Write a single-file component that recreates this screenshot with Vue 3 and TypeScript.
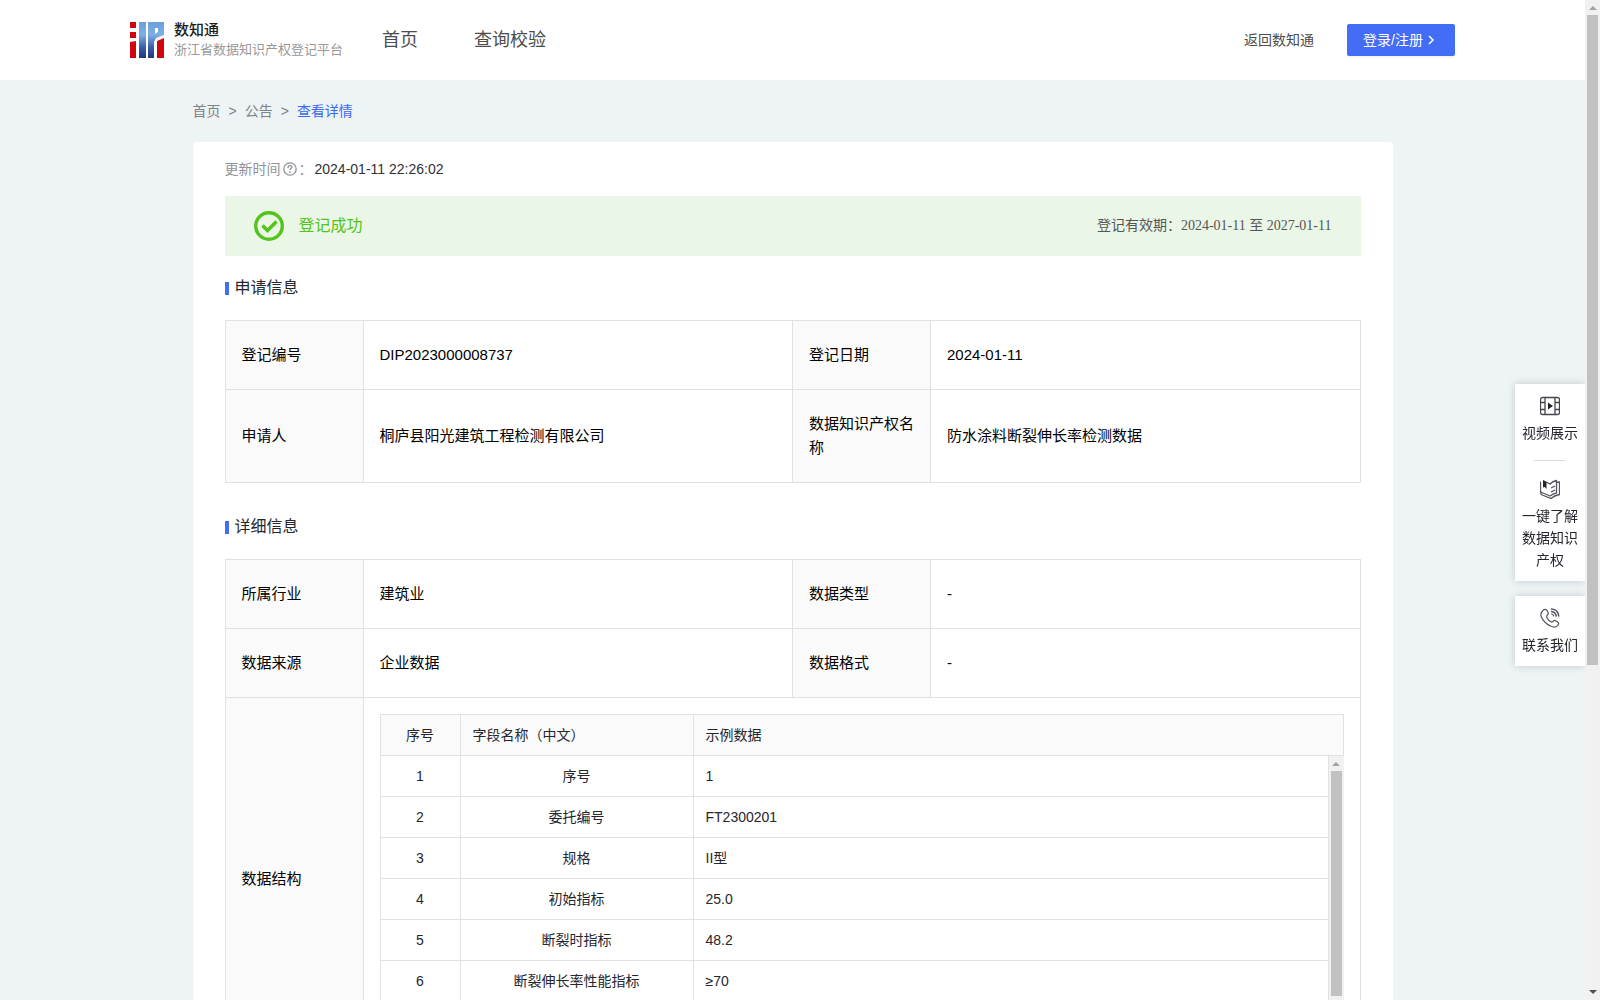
<script setup lang="ts">
interface Pair {
  label: string
  value: string
}

interface FieldRow {
  name: string
  sample: string
}

const navItems: string[] = ['首页', '查询校验']

const applyRows: Pair[][] = [
  [
    { label: '登记编号', value: 'DIP2023000008737' },
    { label: '登记日期', value: '2024-01-11' },
  ],
  [
    { label: '申请人', value: '桐庐县阳光建筑工程检测有限公司' },
    { label: '数据知识产权名称', value: '防水涂料断裂伸长率检测数据' },
  ],
]

const detailRows: Pair[][] = [
  [
    { label: '所属行业', value: '建筑业' },
    { label: '数据类型', value: '-' },
  ],
  [
    { label: '数据来源', value: '企业数据' },
    { label: '数据格式', value: '-' },
  ],
]

const fields: FieldRow[] = [
  { name: '序号', sample: '1' },
  { name: '委托编号', sample: 'FT2300201' },
  { name: '规格', sample: 'II型' },
  { name: '初始指标', sample: '25.0' },
  { name: '断裂时指标', sample: '48.2' },
  { name: '断裂伸长率性能指标', sample: '≥70' },
]
</script>

<template>
  <div class="shell">
    <div class="viewport">
      <header class="topbar">
        <a class="brand" href="#">
          <svg class="brand-mark" viewBox="0 0 34 36" aria-hidden="true">
            <defs>
              <linearGradient id="brandBlue" x1="0" y1="0" x2="0" y2="36" gradientUnits="userSpaceOnUse">
                <stop offset="0" stop-color="#6b9fd8" />
                <stop offset="0.35" stop-color="#7fb0e4" />
                <stop offset="0.7" stop-color="#3c5ea8" />
                <stop offset="1" stop-color="#22367c" />
              </linearGradient>
            </defs>
            <path fill="#d0060c" d="M0 0h6v6H0zM0 10h6v6H0zM0 20l6-1v17H0z" />
            <path fill="url(#brandBlue)" d="M9 0h7v36H9zM18 0h16v13l-8 3-2 4v16h-6z" />
            <path fill="#fff" d="M25 6h3v4l-3 2z" />
            <path fill="#d0060c" d="M27 19l7-3v20h-7z" />
          </svg>
          <span class="brand-text">
            <strong>数知通</strong>
            <span>浙江省数据知识产权登记平台</span>
          </span>
        </a>
        <nav class="nav">
          <a v-for="item in navItems" :key="item" href="#">{{ item }}</a>
        </nav>
        <a class="back" href="#">返回数知通</a>
        <button class="login" type="button">
          <span>登录/注册</span>
          <svg viewBox="0 0 14 14" aria-hidden="true">
            <path d="M4 3l4 4-4 4" fill="none" stroke="currentColor" stroke-width="1.5" />
          </svg>
        </button>
      </header>

      <main class="page">
        <nav class="crumbs">
          <a href="#">首页</a><span>&gt;</span><a href="#">公告</a><span>&gt;</span><a class="current" href="#">查看详情</a>
        </nav>

        <article class="card">
          <p class="updated">
            <span>更新时间</span>
            <svg viewBox="0 0 14 14" aria-hidden="true">
              <g fill="none" stroke="#909399" stroke-width="1.3">
                <circle cx="7" cy="7" r="6.200" />
                <path d="M5 6c0-3 4-3 4-1 0 1-2 1-2 3M7 9v2" />
              </g>
            </svg>
            <span>：</span>
            <time>2024-01-11 22:26:02</time>
          </p>

          <div class="banner">
            <svg viewBox="0 0 30 30" aria-hidden="true">
              <g fill="none" stroke="#52c41a">
                <circle cx="15" cy="15" r="13.3" stroke-width="3.4" />
                <path d="M8.5 14.5l5 5 9-9" stroke-width="3.6" />
              </g>
            </svg>
            <span class="status">登记成功</span>
            <span class="validity">登记有效期：2024-01-11 至 2027-01-11</span>
          </div>

          <h2 class="section-title">申请信息</h2>
          <table class="info">
            <colgroup><col class="label-col" /><col /><col class="label-col" /><col /></colgroup>
            <tbody>
              <tr v-for="(row, i) in applyRows" :key="i">
                <template v-for="pair in row" :key="pair.label">
                  <th scope="row">{{ pair.label }}</th>
                  <td>{{ pair.value }}</td>
                </template>
              </tr>
            </tbody>
          </table>

          <h2 class="section-title later">详细信息</h2>
          <table class="info">
            <colgroup><col class="label-col" /><col /><col class="label-col" /><col /></colgroup>
            <tbody>
              <tr v-for="(row, i) in detailRows" :key="i">
                <template v-for="pair in row" :key="pair.label">
                  <th scope="row">{{ pair.label }}</th>
                  <td>{{ pair.value }}</td>
                </template>
              </tr>
              <tr>
                <th scope="row">数据结构</th>
                <td class="nested" colspan="3">
                  <table class="fields fields-head">
                    <colgroup><col class="index-col" /><col class="name-col" /><col /></colgroup>
                    <thead>
                      <tr>
                        <th scope="col">序号</th>
                        <th scope="col">字段名称（中文）</th>
                        <th scope="col">示例数据</th>
                      </tr>
                    </thead>
                  </table>
                  <div class="fields-body">
                    <table class="fields">
                      <colgroup><col class="index-col" /><col class="name-col" /><col /></colgroup>
                      <tbody>
                        <tr v-for="(field, i) in fields" :key="field.name">
                          <td>{{ i + 1 }}</td>
                          <td>{{ field.name }}</td>
                          <td>{{ field.sample }}</td>
                        </tr>
                      </tbody>
                    </table>
                    <div class="scrollbar" aria-hidden="true">
                      <i class="arrow up"></i>
                      <i class="thumb inner-thumb"></i>
                      <i class="arrow down"></i>
                    </div>
                  </div>
                </td>
              </tr>
            </tbody>
          </table>
        </article>
      </main>
    </div>

    <div class="scrollbar" aria-hidden="true">
      <i class="arrow up"></i>
      <i class="thumb page-thumb"></i>
      <i class="arrow down"></i>
    </div>

    <aside class="dock">
      <div class="dock-box">
        <a href="#">
          <svg viewBox="0 0 20 20" aria-hidden="true">
            <g fill="none" stroke="#44454d">
              <rect x="0.5" y="1.5" width="19" height="17" rx="2" stroke-width="1.300" />
              <path d="M5 1.5v17M15 1.5v17M0.5 6.500h4.500M0.5 13.500h4.500M15 6.500h4.500M15 13.500h4.500" stroke-width="1.300" />
            </g>
            <path d="M8 6.5l5 3.500-5 3.500z" fill="#22232b" />
          </svg>
          <span>视频展示</span>
        </a>
        <hr />
        <a href="#">
          <svg viewBox="0 0 20 20" aria-hidden="true">
            <g fill="none" stroke="#55565e" stroke-width="1.300" stroke-linejoin="round">
              <path d="M3 1.500l7 3.500c2-2 4-3 6.500-3.500v12.500c-2.500.5-4.500 1.500-6.500 3l-9.500-4V2.500" />
              <path d="M16.500 3.500l3-.5v12.500c-3 .5-6 1.500-8.500 4l-10-4v-3" />
              <path d="M11 9l4-2M11 13l4-2" />
            </g>
            <path d="M3 1.500l3.500 1.700v6.800l-1.700-2-1.800 0.500z" fill="#22232b" />
          </svg>
          <span>一键了解数据知识产权</span>
        </a>
      </div>
      <div class="dock-box">
        <a href="#">
          <svg viewBox="0 0 20 20" aria-hidden="true">
            <g fill="none" stroke="#55565e" stroke-width="1.200" stroke-linecap="round" stroke-linejoin="round">
              <path d="M3 2.500C4.500 1 6 1 7 2.500l1 2c.6 1.300.2 2-.8 2.800-1 .8-.8 1.500 0 2.900s2 2.600 3.200 3.300c1.300.8 1.900.7 2.700-.2.900-1 1.700-1.100 2.800-.4l1.800 1.200c1.100.8 1.200 1.800.4 2.900-1.500 2.200-4.600 2.600-8.100.8C6 15.800 2.800 12.500 1.300 8.800.3 6.200.8 4.200 3 2.500z" />
              <path d="M11.500 1c4 .3 6.800 3 7.200 7M11.500 3.500c2.600.3 4.200 1.800 4.700 4.500" stroke-width="1.500" />
              <path d="M11.500 6c1.200.2 1.900.8 2.200 2" />
            </g>
          </svg>
          <span>联系我们</span>
        </a>
      </div>
    </aside>
  </div>
</template>

<style>
body {
  margin: 0;
}
</style>

<style scoped>
.shell {
  display: flex;
  height: 100vh;
  overflow: hidden;
  background: #eef3f6;
  color: #25262e;
  font: 14px/22px "Liberation Sans", "Noto Sans CJK SC", sans-serif;
}

.shell * {
  box-sizing: border-box;
}

a {
  color: inherit;
  text-decoration: none;
}

.viewport {
  flex: 1;
  min-width: 0;
  overflow-y: auto;
  scrollbar-width: none;
}

.topbar {
  display: flex;
  align-items: center;
  height: 80px;
  padding: 0 130px;
  background: #fff;
  color: #4c4c4c;
  white-space: nowrap;
}

.brand {
  display: flex;
  align-items: center;
  gap: 10px;
}

.brand-mark {
  width: 34px;
  height: 36px;
}

.brand-text {
  display: flex;
  flex-direction: column;
  color: #999;
  font-size: 13px;
  line-height: 20px;
}

.brand-text strong {
  color: #1c1c1c;
  font-size: 15px;
  font-weight: 500;
}

.nav {
  display: flex;
  gap: 56px;
  margin-left: 39px;
  font-size: 18px;
}

.back {
  margin-left: auto;
}

.login {
  display: flex;
  align-items: center;
  height: 32px;
  margin-left: 33px;
  padding: 0 16px;
  border: 0;
  border-radius: 2px;
  background: #446df6;
  box-shadow: 0 2px 0 rgba(0, 0, 0, 0.04);
  color: #fff;
  font: inherit;
}

.login svg {
  width: 14px;
  height: 14px;
  margin-left: 2px;
}

.page {
  max-width: 1200px;
  margin: 0 auto;
}

.crumbs {
  display: flex;
  gap: 8px;
  padding: 20px 0;
  color: #808285;
}

.crumbs .current {
  color: #3a68f2;
}

.card {
  padding: 16px 32px 32px;
  border-radius: 4px;
  background: #fff;
}

.updated {
  display: flex;
  align-items: center;
  margin: 0 0 16px;
  color: #909399;
}

.updated svg {
  width: 14px;
  height: 14px;
  margin: 0 2px;
}

.updated time {
  margin-left: 2px;
  color: #303133;
}

.banner {
  display: flex;
  align-items: center;
  height: 60px;
  padding: 0 29px;
  background: #ebf7e6;
}

.banner svg {
  width: 30px;
  height: 30px;
}

.status {
  margin-left: 15px;
  color: #52c41a;
  font-size: 16px;
}

.validity {
  margin-left: auto;
  color: #555;
  font-family: "Liberation Serif", "Noto Sans CJK SC", serif;
}

.section-title {
  display: flex;
  align-items: center;
  gap: 6px;
  margin: 20px 0;
  font-size: 16px;
  font-weight: 400;
  line-height: 24px;
}

.section-title::before {
  width: 4px;
  height: 13px;
  background: #446df6;
  content: "";
}

.section-title.later {
  margin-top: 32px;
}

table {
  width: 100%;
  border-spacing: 0;
  table-layout: fixed;
}

th {
  font-weight: 400;
  text-align: left;
}

.info {
  border-top: 1px solid #e1e1e1;
  border-left: 1px solid #e1e1e1;
  color: #000;
  font-size: 15px;
  line-height: 24px;
}

.info th,
.info td {
  padding: 22px 16px;
  border-right: 1px solid #e1e1e1;
  border-bottom: 1px solid #e1e1e1;
}

.info th {
  background: #fafafa;
}

.label-col {
  width: 138px;
}

.info td.nested {
  padding: 16px;
}

.fields {
  border-left: 1px solid #e1e1e1;
  color: #25262e;
  font-size: 14px;
}

.fields-head {
  border-top: 1px solid #e1e1e1;
}

.info .fields th,
.info .fields td {
  padding: 8px 12px;
}

.fields td:nth-child(-n + 2),
.fields th:first-child {
  text-align: center;
}

.index-col {
  width: 80px;
}

.name-col {
  width: 233px;
}

.fields-body {
  display: flex;
  align-items: flex-start;
  height: 288px;
  overflow: hidden;
}

.fields-body .fields {
  flex: 1;
  min-width: 0;
}

.scrollbar {
  display: flex;
  flex: none;
  flex-direction: column;
  align-items: center;
  align-self: stretch;
  width: 15px;
  background: #f1f1f1;
}

.arrow {
  height: 15px;
}

.arrow::before {
  display: block;
  border: 4px solid transparent;
  content: "";
}

.arrow.up::before {
  margin-top: 2px;
  border-bottom-color: #a3a3a3;
}

.arrow.down {
  margin-top: auto;
}

.arrow.down::before {
  margin-top: 5px;
  border-top-color: #505050;
}

.thumb {
  width: 11px;
  background: #c1c1c1;
}

.page-thumb {
  height: 65%;
}

.inner-thumb {
  height: 78%;
}

.dock {
  position: fixed;
  top: 384px;
  right: 15px;
  display: flex;
  flex-direction: column;
  gap: 15px;
  width: 70px;
}

.dock-box {
  padding: 12px 7px 10px;
  background: #fff;
  box-shadow: 0 0 8px rgba(0, 0, 0, 0.18);
  clip-path: inset(-12px 0 -12px -12px);
}

.dock-box a {
  display: flex;
  flex-direction: column;
  align-items: center;
  gap: 6px;
  text-align: center;
}

.dock-box svg {
  width: 20px;
  height: 20px;
}

.dock-box hr {
  width: 32px;
  margin: 16px auto 18px;
  border: 0;
  border-top: 1px solid #dcdfe2;
}
</style>
